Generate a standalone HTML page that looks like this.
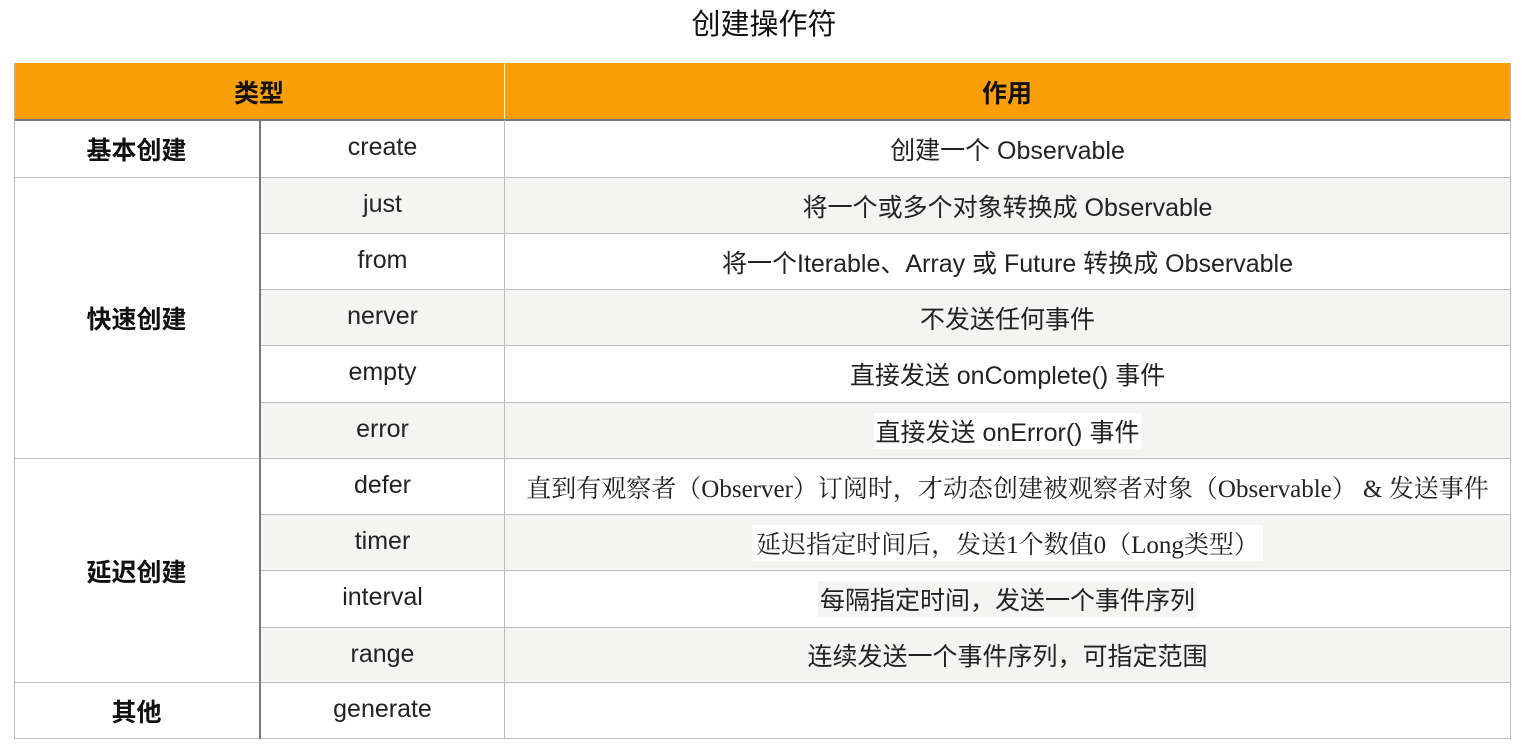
<!DOCTYPE html>
<html><head><meta charset="utf-8"><style>
body{margin:0;width:1528px;height:748px;background:#fff;font-family:"Liberation Sans","Noto Sans CJK SC",sans-serif;color:#222;position:relative;overflow:hidden}
.t{position:absolute;top:5px;left:0;width:1528px;text-align:center;font-size:29px;line-height:40px;color:#111}
.c{position:absolute;display:flex;align-items:center;justify-content:center;font-size:25px;box-sizing:border-box;white-space:nowrap}
.b{font-weight:bold;color:#111}
.g{background:#f4f4f3}
.h{position:absolute;height:1px;background:#bbb}
.v{position:absolute;width:1px;background:#bbb}
.serif{font-family:"Liberation Serif","Noto Serif CJK SC",serif}
</style></head><body>
<div class="t">创建操作符</div>
<div style="position:absolute;left:14px;top:63px;width:1497px;height:57px;background:#fa9e0a"></div>
<div class="c b" style="left:14px;top:63px;width:490px;height:57px">类型</div>
<div class="c b" style="left:504px;top:63px;width:1006px;height:57px">作用</div>
<div style="position:absolute;left:504px;top:63px;width:1px;height:57px;background:#fff"></div>
<div style="position:absolute;left:14px;top:119px;width:1497px;height:2px;background:#777"></div>
<div class="g" style="position:absolute;left:261px;top:177px;width:1249px;height:56px"></div>
<div class="g" style="position:absolute;left:261px;top:289px;width:1249px;height:56px"></div>
<div class="g" style="position:absolute;left:261px;top:402px;width:1249px;height:56px"></div>
<div class="g" style="position:absolute;left:261px;top:514px;width:1249px;height:56px"></div>
<div class="g" style="position:absolute;left:261px;top:627px;width:1249px;height:55px"></div>
<div class="h" style="left:14px;top:177px;width:1497px"></div>
<div class="h" style="left:261px;top:233px;width:1250px"></div>
<div class="h" style="left:261px;top:289px;width:1250px"></div>
<div class="h" style="left:261px;top:345px;width:1250px"></div>
<div class="h" style="left:261px;top:402px;width:1250px"></div>
<div class="h" style="left:14px;top:458px;width:1497px"></div>
<div class="h" style="left:261px;top:514px;width:1250px"></div>
<div class="h" style="left:261px;top:570px;width:1250px"></div>
<div class="h" style="left:261px;top:627px;width:1250px"></div>
<div class="h" style="left:14px;top:682px;width:1497px"></div>
<div class="h" style="left:14px;top:738px;width:1497px"></div>
<div class="v" style="left:14px;top:63px;height:676px"></div>
<div class="v" style="left:1510px;top:63px;height:676px"></div>
<div class="v" style="left:504px;top:120px;height:619px"></div>
<div style="position:absolute;left:259px;top:120px;width:2px;height:619px;background:#777"></div>
<div class="c b" style="left:14px;top:121px;width:245px;height:56px">基本创建</div>
<div class="c b" style="left:14px;top:178px;width:245px;height:280px">快速创建</div>
<div class="c b" style="left:14px;top:459px;width:245px;height:223px">延迟创建</div>
<div class="c b" style="left:14px;top:683px;width:245px;height:55px">其他</div>
<div class="c" style="left:261px;top:121px;width:243px;height:52px">create</div>
<div class="c" style="left:261px;top:178px;width:243px;height:52px">just</div>
<div class="c" style="left:261px;top:234px;width:243px;height:52px">from</div>
<div class="c" style="left:261px;top:290px;width:243px;height:52px">nerver</div>
<div class="c" style="left:261px;top:346px;width:243px;height:52px">empty</div>
<div class="c" style="left:261px;top:403px;width:243px;height:52px">error</div>
<div class="c" style="left:261px;top:459px;width:243px;height:52px">defer</div>
<div class="c" style="left:261px;top:515px;width:243px;height:52px">timer</div>
<div class="c" style="left:261px;top:571px;width:243px;height:52px">interval</div>
<div class="c" style="left:261px;top:628px;width:243px;height:52px">range</div>
<div class="c" style="left:261px;top:683px;width:243px;height:52px">generate</div>
<div class="c" style="left:505px;top:121px;width:1005px;height:56px">创建一个 Observable</div>
<div class="c" style="left:505px;top:178px;width:1005px;height:56px">将一个或多个对象转换成 Observable</div>
<div class="c" style="left:505px;top:234px;width:1005px;height:56px">将一个Iterable、Array 或 Future 转换成 Observable</div>
<div class="c" style="left:505px;top:290px;width:1005px;height:56px">不发送任何事件</div>
<div class="c" style="left:505px;top:346px;width:1005px;height:56px">直接发送 onComplete() 事件</div>
<div class="c" style="left:505px;top:403px;width:1005px;height:56px"><span style="background:#fff;padding:0 2px">直接发送 onError() 事件</span></div>
<div class="c serif" style="left:505px;top:459px;width:1005px;height:56px;font-size:25px">直到有观察者（Observer）订阅时，才动态创建被观察者对象（Observable） &amp; 发送事件</div>
<div class="c serif" style="left:505px;top:515px;width:1005px;height:56px;font-size:25px"><span style="background:#fff;padding:0 4px">延迟指定时间后，发送1个数值0（Long类型）</span></div>
<div class="c" style="left:505px;top:571px;width:1005px;height:56px"><span style="background:#f4f4f3;padding:0 2px">每隔指定时间，发送一个事件序列</span></div>
<div class="c" style="left:505px;top:627px;width:1005px;height:56px">连续发送一个事件序列，可指定范围</div>
</body></html>
